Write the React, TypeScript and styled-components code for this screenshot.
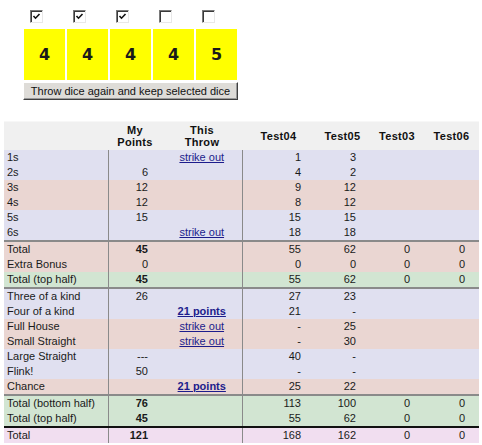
import React from 'react'
import styled, { createGlobalStyle } from 'styled-components'

type Tone = 'lav' | 'pink' | 'green' | 'total'
type Sep = 'none' | 'grey' | 'black'

interface Cell {
    v?: string
    bold?: boolean
    link?: boolean
}

interface Row {
    name: string
    tone: Tone
    sep?: Sep
    mine?: Cell
    now?: Cell
    others: string[]
}

const dice = [
    { value: 4, keep: true },
    { value: 4, keep: true },
    { value: 4, keep: true },
    { value: 4, keep: false },
    { value: 5, keep: false },
]

const strike: Cell = { v: 'strike out', link: true }
const points21: Cell = { v: '21 points', link: true, bold: true }

const rows: Row[] = [
    { name: '1s', tone: 'lav', now: strike, others: ['1', '3', '', ''] },
    { name: '2s', tone: 'lav', mine: { v: '6' }, others: ['4', '2', '', ''] },
    { name: '3s', tone: 'pink', mine: { v: '12' }, others: ['9', '12', '', ''] },
    { name: '4s', tone: 'pink', mine: { v: '12' }, others: ['8', '12', '', ''] },
    { name: '5s', tone: 'lav', mine: { v: '15' }, others: ['15', '15', '', ''] },
    { name: '6s', tone: 'lav', now: strike, others: ['18', '18', '', ''] },
    { name: 'Total', tone: 'pink', sep: 'grey', mine: { v: '45', bold: true }, others: ['55', '62', '0', '0'] },
    { name: 'Extra Bonus', tone: 'pink', mine: { v: '0' }, others: ['0', '0', '0', '0'] },
    { name: 'Total (top half)', tone: 'green', mine: { v: '45', bold: true }, others: ['55', '62', '0', '0'] },
    { name: 'Three of a kind', tone: 'lav', sep: 'grey', mine: { v: '26' }, others: ['27', '23', '', ''] },
    { name: 'Four of a kind', tone: 'lav', now: points21, others: ['21', '-', '', ''] },
    { name: 'Full House', tone: 'pink', now: strike, others: ['-', '25', '', ''] },
    { name: 'Small Straight', tone: 'pink', now: strike, others: ['-', '30', '', ''] },
    { name: 'Large Straight', tone: 'lav', mine: { v: '---' }, others: ['40', '-', '', ''] },
    { name: 'Flink!', tone: 'lav', mine: { v: '50' }, others: ['-', '-', '', ''] },
    { name: 'Chance', tone: 'pink', now: points21, others: ['25', '22', '', ''] },
    { name: 'Total (bottom half)', tone: 'green', sep: 'grey', mine: { v: '76', bold: true }, others: ['113', '100', '0', '0'] },
    { name: 'Total (top half)', tone: 'green', mine: { v: '45', bold: true }, others: ['55', '62', '0', '0'] },
    { name: 'Total', tone: 'total', sep: 'black', mine: { v: '121', bold: true }, others: ['168', '162', '0', '0'] },
]

const players = ['Test04', 'Test05', 'Test03', 'Test06']
const colWidths = [104, 54, 80, 73, 55, 54, 55]

const tones: Record<Tone, string> = {
    lav: '#e0e0f0',
    pink: '#ead6d2',
    green: '#d2e5d2',
    total: '#f1def0',
}

const seps: Record<Sep, string> = {
    none: 'none',
    grey: '2px solid #8a8a8a',
    black: '2px solid #111',
}

const CheckMark = () => (
    <svg width='9' height='9' viewBox='0 0 9 9'>
        <polyline points='1.5,4 3.5,6.2 7.5,2' fill='none' stroke='#111' strokeWidth='1.6' />
    </svg>
)

const App = () => {
    return (
        <Page>
            <GlobalStyle />
            <DiceArea>
                <DiceGrid>
                    {dice.map((d, i) => (
                        <CheckCell key={'c' + i}>
                            <Box role='checkbox' aria-checked={d.keep}>
                                {d.keep && <CheckMark />}
                            </Box>
                        </CheckCell>
                    ))}
                    {dice.map((d, i) => (
                        <Die key={'d' + i}>{d.value}</Die>
                    ))}
                </DiceGrid>
                <ThrowButton>Throw dice again and keep selected dice</ThrowButton>
            </DiceArea>

            <ScoreTable>
                <colgroup>
                    {colWidths.map((w, i) => (
                        <col key={i} style={{ width: w }} />
                    ))}
                </colgroup>
                <thead>
                    <tr>
                        <Head />
                        <Head>
                            My
                            <br />
                            Points
                        </Head>
                        <Head>
                            This
                            <br />
                            Throw
                        </Head>
                        {players.map((p) => (
                            <Head key={p}>{p}</Head>
                        ))}
                    </tr>
                </thead>
                <tbody>
                    {rows.map((r, i) => (
                        <ScoreRow key={i} $tone={r.tone} $sep={r.sep || 'none'}>
                            <NameCell>{r.name}</NameCell>
                            <NumCell $divider $bold={r.mine?.bold}>
                                {r.mine?.v}
                            </NumCell>
                            <ThrowCell>
                                {r.now?.link && (
                                    <ThrowLink href='#' $bold={r.now.bold}>
                                        {r.now.v}
                                    </ThrowLink>
                                )}
                            </ThrowCell>
                            {r.others.map((o, j) => (
                                <NumCell key={j} $divider={j === 0}>
                                    {o}
                                </NumCell>
                            ))}
                        </ScoreRow>
                    ))}
                </tbody>
            </ScoreTable>
        </Page>
    )
}

const GlobalStyle = createGlobalStyle`
    body {
        margin: 0;
        background: #fff;
        font-family: 'Liberation Sans', Arial, sans-serif;
        font-size: 11px;
        color: #1a1a1a;
    }
`

const Page = styled.div`
    width: 482px;
    height: 445px;
    overflow: hidden;
`

const DiceArea = styled.div`
    padding: 10px 0 0 23px;
`

const DiceGrid = styled.div`
    display: grid;
    grid-template-columns: repeat(5, 41px);
    column-gap: 2px;
    margin-left: 1px;
`

const CheckCell = styled.div`
    height: 19px;
    padding-left: 6px;
`

const Box = styled.span`
    display: flex;
    align-items: center;
    justify-content: center;
    width: 13px;
    height: 13px;
    box-sizing: border-box;
    background: #fff;
    border-top: 1px solid #7a7a7a;
    border-left: 1px solid #7a7a7a;
    border-right: 1px solid #e8e8e8;
    border-bottom: 1px solid #e8e8e8;
    box-shadow: inset 1px 1px 0 #3a3a3a;
`

const Die = styled.div`
    height: 51px;
    background: #ffff00;
    display: flex;
    align-items: center;
    justify-content: center;
    font-family: 'DejaVu Sans', Verdana, sans-serif;
    font-weight: bold;
    font-size: 16px;
    color: #1a1a1a;
`

const ThrowButton = styled.button`
    display: block;
    margin-top: 2px;
    width: 215px;
    height: 18px;
    padding: 0;
    background: #dedcd8;
    border: 1px solid;
    border-color: #fff #404040 #404040 #fff;
    box-shadow: inset -1px -1px 0 #9a9a9a;
    font-family: 'Liberation Sans', Tahoma, sans-serif;
    font-size: 11px;
    color: #111;
    line-height: 15px;
`

const ScoreTable = styled.table`
    margin: 21px 0 0 4px;
    width: 475px;
    table-layout: fixed;
    border-collapse: collapse;
    border-spacing: 0;
`

const Head = styled.th`
    height: 28px;
    padding: 0;
    background: #f0f0f0;
    border-top: 1px solid #f7f7f7;
    font-weight: bold;
    font-size: 11px;
    letter-spacing: 0.3px;
    line-height: 12px;
    text-align: center;
    vertical-align: middle;
    color: #111;
`

const ScoreRow = styled.tr<{ $tone: Tone; $sep: Sep }>`
    background: ${(p) => tones[p.$tone]};

    td {
        border-top: ${(p) => seps[p.$sep]};
    }
`

const BaseCell = styled.td`
    height: 15px;
    padding: 0;
    line-height: 15px;
    white-space: nowrap;
`

const NameCell = styled(BaseCell)`
    padding-left: 3px;
    text-align: left;
`

const NumCell = styled(BaseCell)<{ $divider?: boolean; $bold?: boolean }>`
    padding-right: 14px;
    text-align: right;
    font-weight: ${(p) => (p.$bold ? 'bold' : 'normal')};
    border-left: ${(p) => (p.$divider ? '1px solid #8a8a8a' : 'none')};
`

const ThrowCell = styled(BaseCell)`
    text-align: center;
`

const ThrowLink = styled.a<{ $bold?: boolean }>`
    color: #1c1c8c;
    text-decoration: underline;
    font-weight: ${(p) => (p.$bold ? 'bold' : 'normal')};
`

export default App
